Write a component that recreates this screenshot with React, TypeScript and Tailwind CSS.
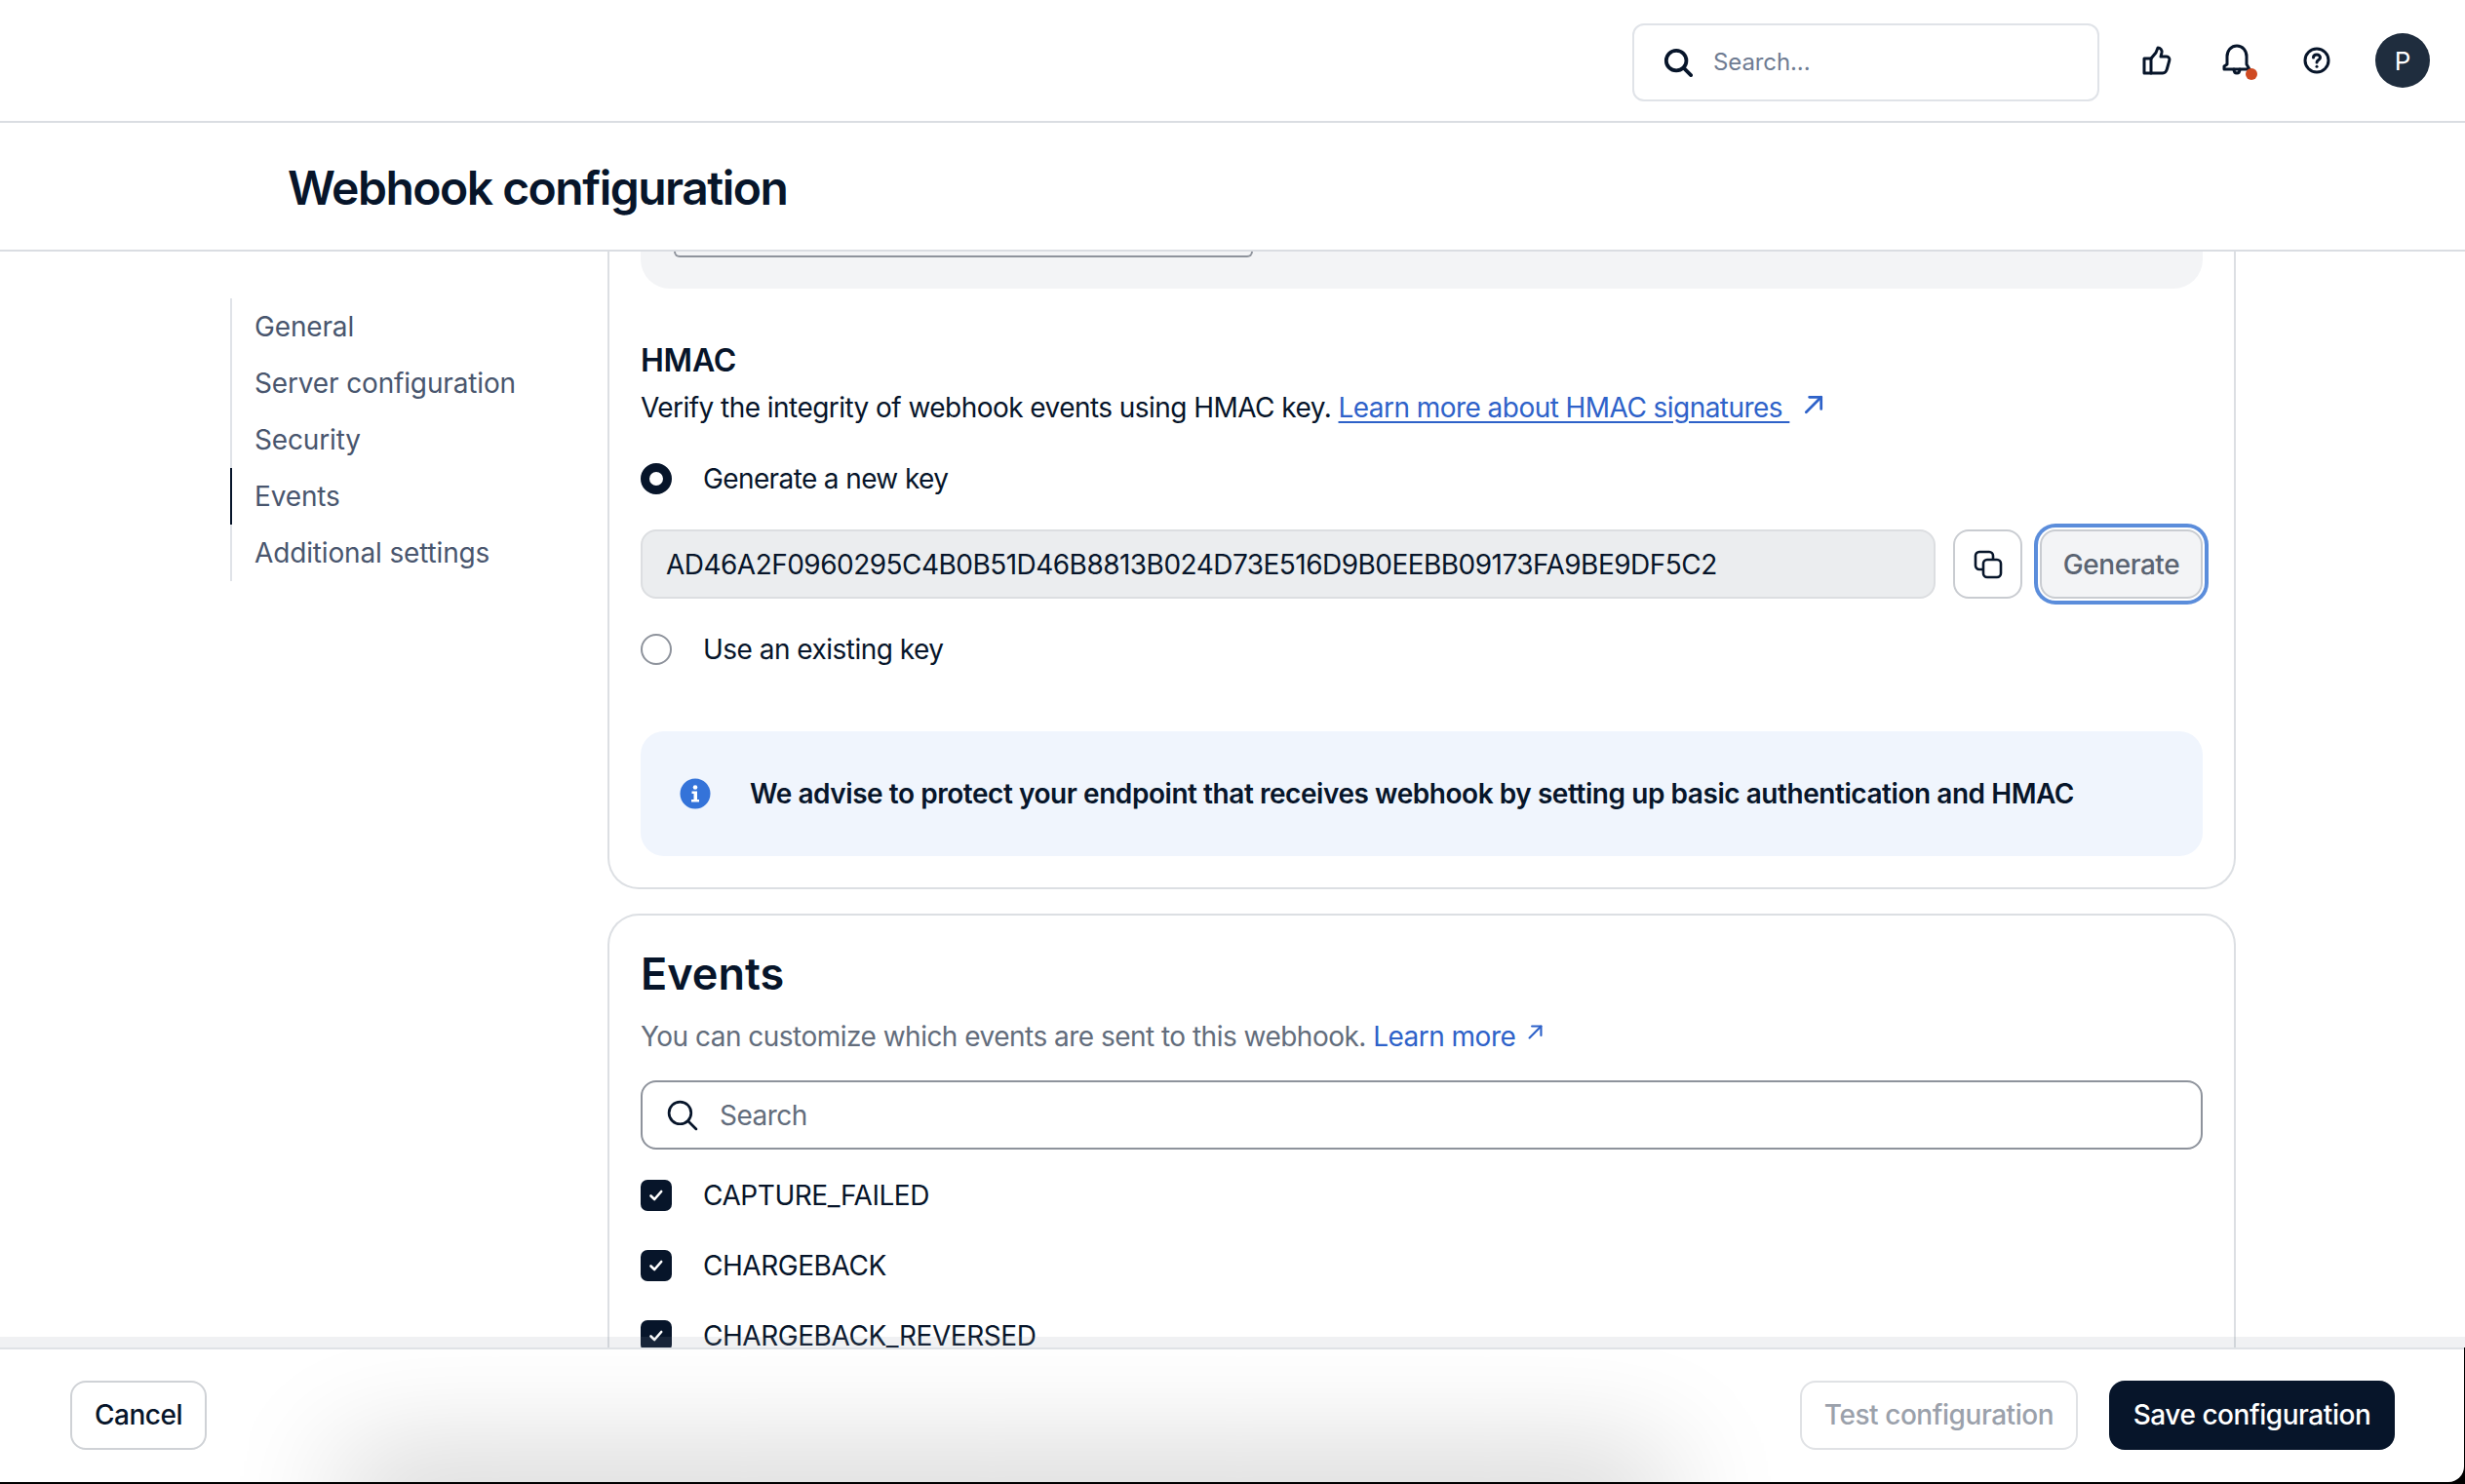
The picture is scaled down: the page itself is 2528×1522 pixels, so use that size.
import React from "react";

const ink = "#07152a";

function SearchIcon({ size, width }: { size: number; width: number }) {
  return (
    <svg width={size} height={size} viewBox="0 0 32 32" fill="none" stroke={ink} strokeWidth={width} strokeLinecap="round">
      <circle cx="14" cy="14" r="11" />
      <path d="M22 22l8 8" />
    </svg>
  );
}

function Thumb() {
  return (
    <svg width="30" height="30" viewBox="0 0 30 30" fill="none" stroke={ink} strokeWidth="3" strokeLinejoin="round" strokeLinecap="round">
      <path d="M2 13h7v15H2z" />
      <path d="M9 13l5-6 2-5c2.500 0 4.500 2 4 5l-1 4h6c2 0 3.500 2 2.800 4l-2.500 9c-.5 2-2 4-4.300 4H9" />
    </svg>
  );
}

function Bell() {
  return (
    <svg width="32" height="34" viewBox="0 0 32 34" fill="none" stroke={ink} strokeWidth="3" strokeLinejoin="round" strokeLinecap="round">
      <path d="M2 26h26l-3-5V13C25 7 21 2 15 2S5 7 5 13v8l-3 2z" />
      <path d="M12 26c0 3 1.500 4 3 4s3-1 3-4" />
    </svg>
  );
}

function Help() {
  return (
    <svg width="28" height="28" viewBox="0 0 28 28" fill="none" stroke={ink} strokeWidth="3" strokeLinecap="round">
      <circle cx="14" cy="14" r="12" />
      <path d="M10.500 11c0-2 1.500-3 3.500-3s3.500 1.300 3.500 3c0 2.500-3.500 2.500-3.500 5" />
      <path d="M14 20.200v.1" />
    </svg>
  );
}

function ExternalArrow({ size }: { size: number }) {
  return (
    <svg width={size} height={size} viewBox="0 0 20 20" fill="none" stroke="#2e62c9" strokeWidth="2.500" strokeLinecap="round" strokeLinejoin="round">
      <path d="M3 17L17 3" />
      <path d="M6 3h11v11" />
    </svg>
  );
}

function Check() {
  return (
    <div className="flex h-8 w-8 shrink-0 items-center justify-center rounded-[7px] bg-[#07152a]">
      <svg width="18" height="18" viewBox="0 0 18 18" fill="none" stroke="#ffffff" strokeWidth="2.600" strokeLinecap="round" strokeLinejoin="round">
        <path d="M3.500 9.500l3.700 3.500 7-8" />
      </svg>
    </div>
  );
}

const navItems = ["General", "Server configuration", "Security", "Events", "Additional settings"];
const events = ["CAPTURE_FAILED", "CHARGEBACK", "CHARGEBACK_REVERSED"];

export default function App() {
  return (
    <div className="relative flex h-[1522px] w-[2528px] flex-col overflow-hidden bg-black font-['Inter',sans-serif] tracking-[-0.52px] text-[#07152a]">
      <header className="flex h-[126px] shrink-0 items-center justify-end border-b-2 border-[#dadde2] bg-white">
        <div className="mr-[40px] mt-[3px] flex h-[80px] w-[479px] items-center rounded-[12px] border-2 border-[#e0e3e8] pl-[30px]">
          <SearchIcon size={30} width={4} />
          <span className="ml-[21px] text-[24px] tracking-[-0.1px] text-[#6f7c92]">Search...</span>
        </div>
        <div className="flex w-[38px] justify-center"><Thumb /></div>
        <div className="relative ml-[45px] flex w-[38px] justify-center">
          <Bell />
          <span className="absolute left-[27px] top-[25px] h-3 w-3 rounded-full bg-[#cf4a22]" />
        </div>
        <div className="ml-[43px] flex w-[38px] justify-center"><Help /></div>
        <div className="ml-[41px] mr-[36px] flex h-[56px] w-[56px] items-center justify-center rounded-full bg-[#1f2d3e] text-[26px] tracking-normal text-white">P</div>
      </header>

      <div className="flex h-[132px] shrink-0 items-center border-b-2 border-[#dadde2] bg-white pl-[295px] pt-[3px]">
        <h1 className="text-[48px] font-semibold leading-none tracking-[-1.5px]">Webhook configuration</h1>
      </div>

      <div className="flex min-h-0 flex-1 overflow-hidden bg-white">
        <nav className="ml-[236px] mt-[48px] flex h-[290px] w-[387px] shrink-0 flex-col">
          {navItems.map((item) => (
            <div
              key={item}
              className={`flex h-[58px] items-center border-l-2 pl-[23px] text-[28px] tracking-[-0.15px] text-[#49566e] ${item === "Events" ? "border-[#07152a]" : "border-[#e0e3e8]"}`}
            >
              {item}
            </div>
          ))}
        </nav>

        <div className="flex w-[1670px] shrink-0 flex-col">
          <section className="flex h-[654px] shrink-0 flex-col rounded-b-[32px] border-x-2 border-b-2 border-[#dcdfe3] px-[32px]">
            <div className="h-[38px] shrink-0 rounded-b-[30px] bg-[#f3f4f6] pl-[34px]">
              <div className="h-[6px] w-[594px] rounded-b-[14px] border-x-2 border-b-2 border-[#8e939c]" />
            </div>
            <h3 className="mt-[52px] text-[32px] font-semibold leading-[44px] tracking-[-0.25px]">HMAC</h3>
            <p className="mt-[4px] flex items-center text-[28px] leading-[44px] tracking-[-0.55px]">
              <span>Verify the integrity of webhook events using HMAC key.&nbsp;</span>
              <a className="text-[#2e62c9] underline underline-offset-4">Learn more about HMAC signatures&nbsp;</a>
              <span className="ml-[14px] -mt-[6px]"><ExternalArrow size={22} /></span>
            </p>
            <label className="mt-[35px] flex h-8 items-center gap-[32px] text-[28px] tracking-[-0.62px]">
              <span className="h-8 w-8 rounded-full border-[9px] border-[#07152a] bg-white" />
              Generate a new key
            </label>
            <div className="mt-[36px] flex h-[71px] items-stretch gap-[18px]">
              <div className="flex flex-1 items-center rounded-[16px] border-2 border-[#dcdee1] bg-[#ebedef] pl-[24px] text-[28px] tracking-[-0.53px]">
                AD46A2F0960295C4B0B51D46B8813B024D73E516D9B0EEBB09173FA9BE9DF5C2
              </div>
              <button className="flex w-[71px] items-center justify-center rounded-[16px] border-2 border-[#c9ccd1] bg-white">
                <svg width="30" height="30" viewBox="0 0 30 30" fill="none" stroke={ink} strokeWidth="2.600">
                  <rect x="2" y="2" width="18" height="18" rx="4" />
                  <rect x="10" y="10" width="18" height="18" rx="4" fill="#ffffff" />
                </svg>
              </button>
              <button className="w-[167px] rounded-[16px] border-2 border-[#c9ccd1] bg-[#f3f4f6] text-[28px] font-medium tracking-[-0.45px] text-[#5b6472] shadow-[0_0_0_2px_#ffffff,0_0_0_6px_#5b8ddb]">
                Generate
              </button>
            </div>
            <label className="mt-[36px] flex h-8 items-center gap-[32px] text-[28px]">
              <span className="h-8 w-8 rounded-full border-2 border-[#8e939c] bg-white" />
              Use an existing key
            </label>
            <div className="mt-[68px] flex h-[128px] shrink-0 items-center rounded-[24px] bg-[#f0f5fd] pl-[40px]">
              <svg width="32" height="32" viewBox="0 0 32 32">
                <circle cx="16" cy="16" r="15.500" fill="#3473d9" />
                <circle cx="16" cy="9.500" r="2.300" fill="#ffffff" />
                <path d="M12.500 13.500H18V22h2v2.500h-8V22h2.500v-6h-2z" fill="#ffffff" />
              </svg>
              <span className="ml-[40px] text-[28px] font-semibold tracking-[-0.45px]">We advise to protect your endpoint that receives webhook by setting up basic authentication and HMAC</span>
            </div>
          </section>

          <section className="mt-[25px] flex flex-1 flex-col rounded-t-[32px] border-x-2 border-t-2 border-[#dcdfe3] px-[32px]">
            <h2 className="mt-[30px] text-[45px] font-semibold leading-[60px] tracking-normal">Events</h2>
            <p className="mt-[14px] flex items-center text-[28px] leading-[40px] text-[#636d7c]">
              <span>You can customize which events are sent to this webhook.&nbsp;</span>
              <a className="text-[#2e62c9]">Learn more</a>
              <span className="ml-[12px] -mt-[10px]"><ExternalArrow size={17} /></span>
            </p>
            <div className="mt-[25px] flex h-[71px] shrink-0 items-center rounded-[16px] border-2 border-[#8e939c] pl-[24px]">
              <SearchIcon size={33} width={2.600} />
              <span className="ml-[22px] text-[28px] text-[#636d7c]">Search</span>
            </div>
            <div className="mt-[31px] flex flex-col gap-[40px]">
              {events.map((event) => (
                <label key={event} className="flex h-8 items-center gap-[32px] text-[28px] tracking-[-0.45px]">
                  <Check />
                  {event}
                </label>
              ))}
            </div>
          </section>
        </div>
      </div>

      <div className="absolute inset-x-0 bottom-[140px] h-[11px] bg-[#8a95a5]/[0.13]" />

      <footer className="relative mb-[2px] mr-[1px] flex h-[138px] shrink-0 overflow-hidden rounded-br-[16px] border-t-2 border-[#dfe2e6] bg-white">
        <div className="absolute -bottom-[40px] left-[380px] h-[40px] w-[1300px] shadow-[0_0_120px_30px_rgba(0,0,0,0.18)]" />
        <div className="relative flex flex-1 items-center justify-between pb-[2px] pl-[72px] pr-[71px] tracking-[-0.45px]">
          <button className="h-[71px] w-[140px] rounded-[16px] border-2 border-[#cfd2d6] bg-white text-[28px] font-medium">Cancel</button>
          <div className="flex gap-[32px]">
            <button className="h-[71px] w-[285px] rounded-[16px] border-2 border-[#e0e2e5] bg-white text-[28px] font-medium text-[#9ba1ab]">Test configuration</button>
            <button className="h-[71px] w-[293px] rounded-[16px] bg-[#07152a] text-[28px] font-medium text-white">Save configuration</button>
          </div>
        </div>
      </footer>
    </div>
  );
}
